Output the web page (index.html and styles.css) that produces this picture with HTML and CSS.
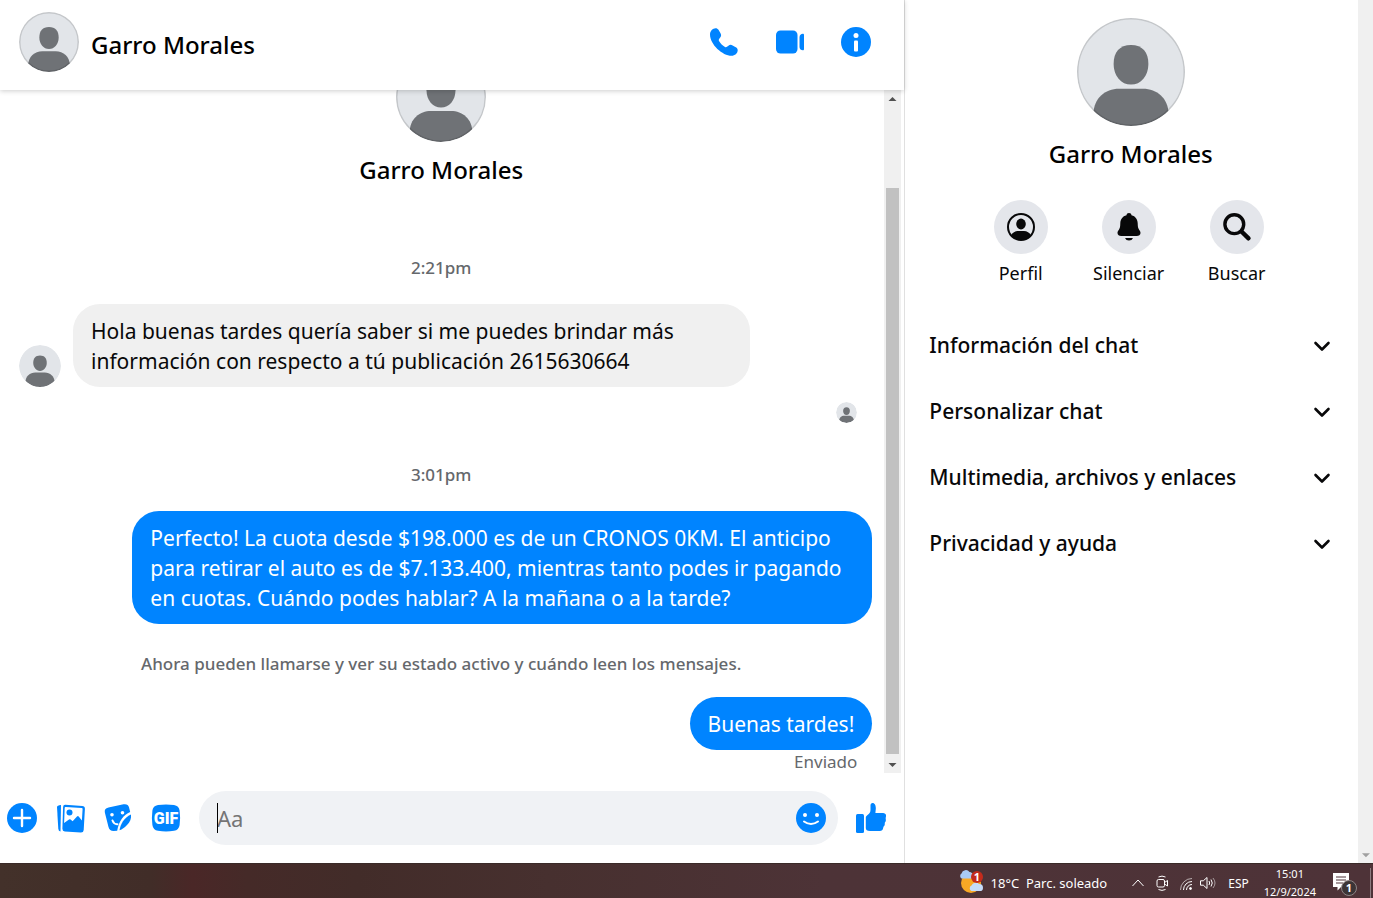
FILE: index.html
```html
<!DOCTYPE html>
<html lang="es">
<head>
<meta charset="utf-8">
<title>Garro Morales</title>
<link rel="stylesheet" href="styles.css">
</head>
<body>
<svg class="defs" aria-hidden="true">
  <symbol id="avatar" viewBox="0 0 36 36">
    <clipPath id="disc"><circle cx="18" cy="18" r="18"/></clipPath>
    <g clip-path="url(#disc)">
      <rect width="36" height="36" fill="#e2e5e9"/>
      <path fill="#6f7276" d="M18 9c3.800 0 5.800 2.400 5.800 6.300 0 4-2.500 6.900-5.800 6.900s-5.800-2.900-5.800-6.900C12.200 11.400 14.200 9 18 9z"/>
      <path fill="#6f7276" d="M14 23.600h8c4.600 0 8.500 3.200 8.500 8.400v6h-25v-6c0-5.200 3.900-8.400 8.500-8.400z"/>
    </g>
  </symbol>
  <symbol id="chevron" viewBox="0 0 18 18"><path d="M2.500 7 9 13.500 15.500 7" fill="none" stroke="#080809" stroke-width="2.600" stroke-linecap="round" stroke-linejoin="round"/></symbol>
</svg>
<main class="app">
  <section class="chat">
    <header class="chat-header">
      <svg class="avatar avatar-md"><use href="#avatar"/><circle class="ring" cx="50%" cy="50%" r="50%"/></svg>
      <h1 class="name">Garro Morales</h1>
      <div class="calls">
        <button class="icon-btn" aria-label="Llamar"><svg viewBox="0 0 30 30"><path d="M1 7.500C1 4 3.800 1.200 6.600 1.200c1.300 0 2.200.6 2.900 1.600l2 3.500c.9 1.600.8 2.800-.3 4.200l-1.100 1.400c-.5.700-.5 1.300-.1 2 1.500 2.500 3.500 4.500 6 6 .7.400 1.300.4 2-.1l1.400-1.100c1.400-1.100 2.600-1.200 4.200-.3l3.200 1.900c1.200.7 1.900 1.700 1.900 3 0 3-2.800 5.500-6.200 5.500C13.500 28.800 1 17.500 1 7.500z"/></svg></button>
        <button class="icon-btn" aria-label="Videollamada"><svg viewBox="0 0 30 30"><rect x="1" y="3.500" width="21.500" height="23" rx="4.500"/><path d="M24.500 10c0-2 1.600-3.300 3.300-3.300.8 0 1.200.5 1.200 1.300v14c0 .8-.4 1.300-1.200 1.300-1.700 0-3.300-1.300-3.300-3.300z"/></svg></button>
        <button class="icon-btn" aria-label="Información"><svg viewBox="0 0 30 30"><circle cx="15" cy="15" r="15"/><circle cx="15" cy="8.500" r="2.500" fill="#fff"/><rect x="13" y="13.500" width="4" height="11" rx="1" fill="#fff"/></svg></button>
      </div>
    </header>
    <div class="thread-row">
      <div class="thread">
        <div class="intro">
          <svg class="avatar avatar-lg"><use href="#avatar"/><circle class="ring" cx="50%" cy="50%" r="50%"/></svg>
          <h2 class="name">Garro Morales</h2>
        </div>
        <time class="stamp">2:21pm</time>
        <div class="received">
          <svg class="avatar avatar-sm"><use href="#avatar"/></svg>
          <p class="bubble bubble-in">Hola buenas tardes quería saber si me puedes brindar más <br>información con respecto a tú publicación 2615630664</p>
        </div>
        <svg class="avatar seen"><use href="#avatar"/></svg>
        <time class="stamp">3:01pm</time>
        <p class="bubble bubble-out">Perfecto! La cuota desde $198.000 es de un CRONOS 0KM. El anticipo para retirar el auto es de $7.133.400, mientras tanto podes ir pagando en cuotas. Cuándo podes hablar? A la mañana o a la tarde?</p>
        <p class="notice">Ahora pueden llamarse y ver su estado activo y cuándo leen los mensajes.</p>
        <p class="bubble bubble-out">Buenas tardes!</p>
        <p class="status">Enviado</p>
      </div>
      <div class="scroll scroll-chat" aria-hidden="true">
        <svg class="arrow" viewBox="0 0 17 17"><path d="M4.500 11h8l-4-4z"/></svg>
        <div class="thumb"></div>
        <svg class="arrow" viewBox="0 0 17 17"><path d="M4.500 7h8l-4 4z"/></svg>
      </div>
    </div>
    <form class="composer">
      <button type="button" class="icon-btn" aria-label="Más"><svg viewBox="0 0 30 30"><circle cx="15" cy="15" r="15"/><path d="M15 7v16M7 15h16" stroke="#fff" stroke-width="2.400" stroke-linecap="round"/></svg></button>
      <button type="button" class="icon-btn" aria-label="Fotos"><svg viewBox="0 0 30 30"><path d="M2 4.200Q2 2.200 6 2l-.5 26.500q-2-.3-2.200-2.700z"/><path d="M10.300 1.800l17 1.200q2.800.2 2.600 3l-1.200 21q-.2 2.700-3 2.500L9.800 28.500q-2.500-.2-2.400-2.900L8.100 4q.1-2.300 2.200-2.200z"/><path fill="#fff" d="M9.700 4.800q.1-.9 1-.8l16.100 1.100q.8.100.8.900l-.7 11.500-3.200-4q-.8-1-1.700 0l-4.400 4.800-2-1.800q-.8-.7-1.600 0L9.100 20z"/><circle cx="14.500" cy="9.500" r="3"/></svg></button>
      <button type="button" class="icon-btn" aria-label="Stickers"><svg viewBox="0 0 30 30"><path d="M5.500 4.500 20.500 1.300q4.500-.8 5.500 3l1.200 4.800C20.500 12 16 18 14.200 27.800L10.500 28q-4 0-5-4L1.900 9.800Q.9 5.500 5.500 4.500z"/><path d="M28 11.500c.5 4.500-1 7.500-4 10.500s-4.500 4.200-7.500 5.200C17.500 21 21 14.800 28 11.500z"/><circle cx="9" cy="11.800" r="1.800" fill="#fff"/><circle cx="19.500" cy="9.800" r="1.800" fill="#fff"/><path d="M9.500 17.500q1.500 4 5 3.700" fill="none" stroke="#fff" stroke-width="2" stroke-linecap="round"/></svg></button>
      <button type="button" class="icon-btn" aria-label="GIF"><svg viewBox="0 0 30 30"><path d="M7 2Q15 .8 23 2q5 .8 5.600 5.500Q29.600 15 28.600 22q-.7 5-5.600 5.800-8 1.200-16 0Q2.100 27 1.400 22q-1-7 0-14.500Q2 2.800 7 2z"/><text class="gif" x="15" y="21">GIF</text></svg></button>
      <div class="field">
        <input type="text" class="entry" placeholder="Aa" aria-label="Mensaje">
        <span class="caret"></span>
        <button type="button" class="icon-btn" aria-label="Emoji"><svg viewBox="0 0 30 30"><circle cx="15" cy="15" r="15"/><circle cx="9" cy="12" r="2" fill="#fff"/><circle cx="21" cy="12" r="2" fill="#fff"/><path d="M8 18.500q7 5 14 0" fill="none" stroke="#fff" stroke-width="2" stroke-linecap="round"/></svg></button>
      </div>
      <button type="button" class="icon-btn" aria-label="Me gusta"><svg viewBox="0 0 30 30"><rect x="0" y="11" width="8" height="19" rx="1.500"/><path d="M9.800 14.500c0-2 4.700-3.300 4.700-7.500V2.500c0-1.500.8-2.500 2-2.500 2.500 0 3.500 3 3.300 5.800L19.400 10H27c2 0 3.200 1.300 3 3 0 1.200-.3 1.500-.3 2.500 0 .8.300 1 .1 2.300-.2 1-.8 1.300-1 2.100-.1.800.1 1.400-.2 2.300-.3.800-1 1.100-1.200 1.800-.3 1-.4 4-3.400 4H14c-3 0-4.200-1-4.200-3z"/></svg></button>
    </form>
  </section>
  <aside class="details">
    <div class="panel">
      <svg class="avatar avatar-xl"><use href="#avatar"/><circle class="ring" cx="50%" cy="50%" r="50%"/></svg>
      <h2 class="name">Garro Morales</h2>
      <div class="actions">
        <button class="action"><span class="disc"><svg viewBox="0 0 30 30"><circle cx="15" cy="15" r="13" fill="none" stroke="#080809" stroke-width="2"/><ellipse cx="15" cy="12" rx="4.800" ry="5.400"/><path d="M5 23.500C6.500 20.500 9 19 12 19h6c3 0 5.500 1.500 7 4.500-5 6-15 6-20 0z"/></svg></span>Perfil</button>
        <button class="action"><span class="disc"><svg viewBox="0 0 30 30"><path d="M15 1c1.500 0 2.300.9 2.500 2.300 4 1 6 4 6.200 8 .1 2.800.2 4.700 1.400 6.500.8 1.200 1.400 1.700 1.400 3.200 0 2-1.700 3-3.700 3H7.200c-2 0-3.700-1-3.700-3 0-1.500.6-2 1.400-3.200 1.200-1.800 1.300-3.700 1.400-6.500.2-4 2.200-7 6.200-8C12.700 1.900 13.500 1 15 1z"/><path d="M11 26h8q-1 2.600-4 2.600T11 26z"/></svg></span>Silenciar</button>
        <button class="action"><span class="disc"><svg viewBox="0 0 30 30"><circle cx="12.300" cy="12.200" r="9.400" fill="none" stroke="#080809" stroke-width="3.400"/><path d="M19.500 19.500 26.500 26.300" stroke="#080809" stroke-width="4.400" stroke-linecap="round"/></svg></span>Buscar</button>
      </div>
      <div class="sections">
        <button class="section">Información del chat<svg><use href="#chevron"/></svg></button>
        <button class="section">Personalizar chat<svg><use href="#chevron"/></svg></button>
        <button class="section">Multimedia, archivos y enlaces<svg><use href="#chevron"/></svg></button>
        <button class="section">Privacidad y ayuda<svg><use href="#chevron"/></svg></button>
      </div>
    </div>
    <div class="scroll scroll-page" aria-hidden="true"><svg class="arrow" viewBox="0 0 17 17"><path d="M4.500 7h9l-4.500 4.500z"/></svg></div>
  </aside>
</main>
<footer class="taskbar">
  <svg class="weather" viewBox="0 0 26 26"><circle cx="13" cy="13" r="10" fill="#f9a825"/><path d="M3.500 8.500a3 3 0 0 1 0-5 4.500 4.500 0 0 1 8-1.500c2.500 0 3.500 2 3 6.500z" fill="#a9caf4"/><path d="M13.500 21a3 3 0 0 1 0-5.500 4.500 4.500 0 0 1 7.500-1.500c3 0 4 1.500 4 4s-1.500 3-3 3z" fill="#c5dcfa"/><circle cx="19" cy="7" r="6" fill="#c42b1c"/><text class="badge" x="19" y="11">1</text></svg>
  <span class="forecast">18°C&nbsp; Parc. soleado</span>
  <svg class="tray tray-up" viewBox="0 0 16 16"><path d="M2.500 11 8 5l5.500 6"/></svg>
  <svg class="tray tray-meet" viewBox="0 0 16 16"><path d="M4.500 2q3.500-1.800 7 0M4.500 14.500q3.500 1.800 7 0"/><rect x="3" y="4.500" width="7.500" height="7.500" rx="1.500"/><path d="m10.500 7.500 3-2v5.500l-3-2z"/></svg>
  <svg class="tray tray-wifi" viewBox="0 0 16 16"><path d="M2.500 15A11.500 11.500 0 0 1 14 3.500" opacity=".6"/><path d="M5.500 15A8.500 8.500 0 0 1 14 6.500M8.500 15A5.500 5.500 0 0 1 14 9.500"/><circle cx="12.500" cy="13.500" r="1" fill="#fff"/></svg>
  <svg class="tray tray-sound" viewBox="0 0 16 16"><path d="M.5 5.800h2.800L7 2.500v11l-3.700-3.300H.5zM9 6q1.300 2 0 4M11 4.500q2.500 3.500 0 7"/><path d="M13 3q4 5 0 10" opacity=".5"/></svg>
  <span class="lang">ESP</span>
  <time class="clock"><span>15:01</span><span>12/9/2024</span></time>
  <svg class="notify" viewBox="0 0 26 26"><path fill="#fff" d="M1 3h16v14H9l-3.500 3.500V17H1z"/><path d="M4 7h10M4 10h10M4 13h7" stroke="#4e3338"/><circle cx="17" cy="18" r="7.500" fill="#3b3436" stroke="#8d8586"/><text class="badge" x="17" y="22">1</text></svg>
  <span class="show-desktop"></span>
</footer>
</body>
</html>
```
FILE: styles.css
```css
* { box-sizing: border-box; }

body {
  margin: 0;
  height: 100vh;
  display: flex;
  flex-direction: column;
  background: #fff;
  color: #080809;
  font-family: "Noto Sans", "Open Sans", sans-serif;
  overflow: hidden;
}

h1, h2, p { margin: 0; }

button {
  border: 0;
  padding: 0;
  background: none;
  color: inherit;
  font: inherit;
  cursor: pointer;
}

.defs { position: absolute; width: 0; height: 0; }

.app { flex: 1; min-height: 0; display: flex; }

.chat {
  flex: 905 1 0;
  min-width: 0;
  display: flex;
  flex-direction: column;
  border-right: 1px solid #e0e0e0;
}

.name {
  font-size: 24px;
  line-height: 32px;
  font-weight: 500;
  color: #000;
}

.avatar { display: block; flex: none; border-radius: 50%; overflow: hidden; }
.avatar-sm { width: 42px; height: 42px; }
.avatar-md { width: 60px; height: 60px; }
.avatar-lg { width: 90px; height: 90px; }
.avatar-xl { width: 108px; height: 108px; }
.ring { fill: none; stroke: rgba(0, 0, 0, .13); stroke-width: 3px; }

.chat-header {
  display: flex;
  align-items: center;
  gap: 12px;
  height: 90px;
  flex: none;
  padding: 0 33px 6px 19px;
  position: relative;
  background: #fff;
  box-shadow: 0 1px 5px rgba(0, 0, 0, .2);
}

.chat-header .name { padding-top: 6px; }

.calls { display: flex; gap: 36px; margin-left: auto; }

.icon-btn { width: 30px; height: 30px; flex: none; fill: #0084ff; }
.icon-btn svg { display: block; width: 30px; height: 30px; }
.gif {
  font: 900 16px Roboto, "Open Sans", sans-serif;
  text-anchor: middle;
  fill: #fff;
}

.thread-row { flex: 1; min-height: 0; display: flex; padding-right: 3px; }

.thread {
  flex: 1;
  min-width: 0;
  display: flex;
  flex-direction: column;
  justify-content: flex-end;
  padding: 0 12px 0 19px;
}

.intro {
  display: flex;
  flex-direction: column;
  align-items: center;
  gap: 12px;
  margin-bottom: 70px;
}

.intro, .stamp, .notice { margin-right: 9px; }

.stamp, .notice {
  align-self: center;
  font-size: 17px;
  line-height: 24px;
  font-weight: 500;
  color: #65686c;
}

.stamp { margin-bottom: 24px; }
.notice { margin-top: 28px; margin-bottom: 21px; }

.received { display: flex; align-items: flex-end; gap: 12px; }

.bubble {
  padding: 12px 18px 11px;
  border-radius: 27px;
  font-size: 21px;
  line-height: 30px;
}

.bubble-in { flex: 0 1 677px; background: #f0f0f0; }

.bubble-out {
  align-self: flex-end;
  max-width: 740px;
  background: #0084ff;
  color: #fff;
}

.seen {
  width: 21px;
  height: 21px;
  align-self: flex-end;
  margin: 15px 15px 40px 0;
}

.status {
  align-self: flex-end;
  margin-right: 15px;
  font-size: 17px;
  line-height: 23px;
  color: #65686c;
}

.scroll { display: flex; flex-direction: column; background: #f0f0f0; }
.scroll-chat { width: 17px; }
.scroll-page { width: 15px; justify-content: flex-end; }
.arrow { display: block; width: 100%; height: 17px; fill: #505050; }
.scroll-page .arrow { fill: #a0a0a0; }
.thumb { flex: 1; margin: 81px 2px 2px; background: #c1c1c1; }

.composer {
  display: flex;
  align-items: center;
  gap: 18px;
  height: 90px;
  flex: none;
  padding: 0 18px 0 7px;
}

.field {
  flex: 1;
  min-width: 0;
  display: flex;
  align-items: center;
  position: relative;
  height: 54px;
  padding: 0 12px 0 18px;
  border-radius: 27px;
  background: #f0f2f5;
}

.entry {
  flex: 1;
  min-width: 0;
  padding: 0;
  border: 0;
  outline: 0;
  background: none;
  font: 22px/30px "Noto Sans", "Open Sans", sans-serif;
}

.entry::placeholder { color: #757575; opacity: 1; }

.caret {
  position: absolute;
  left: 18px;
  top: 12px;
  width: 1px;
  height: 30px;
  background: #000;
}

.details { flex: 468 1 0; min-width: 0; display: flex; }

.panel {
  flex: 1;
  min-width: 0;
  display: flex;
  flex-direction: column;
  align-items: center;
  padding: 18px 2px 0 0;
}

.panel .name { margin-top: 12px; }

.actions { display: flex; margin: 30px 4px 0 0; }

.action {
  width: 108px;
  display: flex;
  flex-direction: column;
  align-items: center;
  gap: 7px;
  font-size: 18px;
  line-height: 24px;
}

.disc {
  width: 54px;
  height: 54px;
  display: grid;
  place-items: center;
  border-radius: 50%;
  background: #e4e6eb;
}

.disc svg { width: 30px; height: 30px; fill: #080809; }

.sections { align-self: stretch; margin-top: 27px; }

.section {
  width: 100%;
  height: 66px;
  display: flex;
  align-items: center;
  justify-content: space-between;
  padding: 0 25px 0 24px;
  font-size: 21px;
  font-weight: 500;
  line-height: 30px;
}

.section svg { width: 18px; height: 18px; }

.taskbar {
  display: flex;
  align-items: center;
  justify-content: flex-end;
  height: 35px;
  flex: none;
  padding: 4px 2px 0 0;
  border-top: 1px solid #3a2a28;
  background: linear-gradient(90deg, #43312a 0%, #412d28 11%, #4a2727 14%, #452a28 18%, #422c29 26%, #47302f 40%, #4d3337 60%, #4e3338 100%);
  color: #fff;
  font-size: 13px;
}

.weather { width: 26px; height: 26px; margin-right: 7px; }
.badge { font: 700 11px "Noto Sans", sans-serif; text-anchor: middle; fill: #fff; }
.forecast { margin-right: 23px; }
.tray { width: 16px; height: 16px; margin-right: 8px; fill: none; stroke: #fff; stroke-width: 1; }
.tray-wifi { margin-right: 6px; }
.lang { font-size: 12px; margin: 0 15px 0 4px; }

.clock {
  display: flex;
  flex-direction: column;
  align-items: center;
  margin-right: 16px;
  font-size: 11px;
  line-height: 18px;
}

.notify { width: 26px; height: 26px; margin-right: 12px; }
.show-desktop { width: 1px; align-self: stretch; background: #8d7c80; }
```
